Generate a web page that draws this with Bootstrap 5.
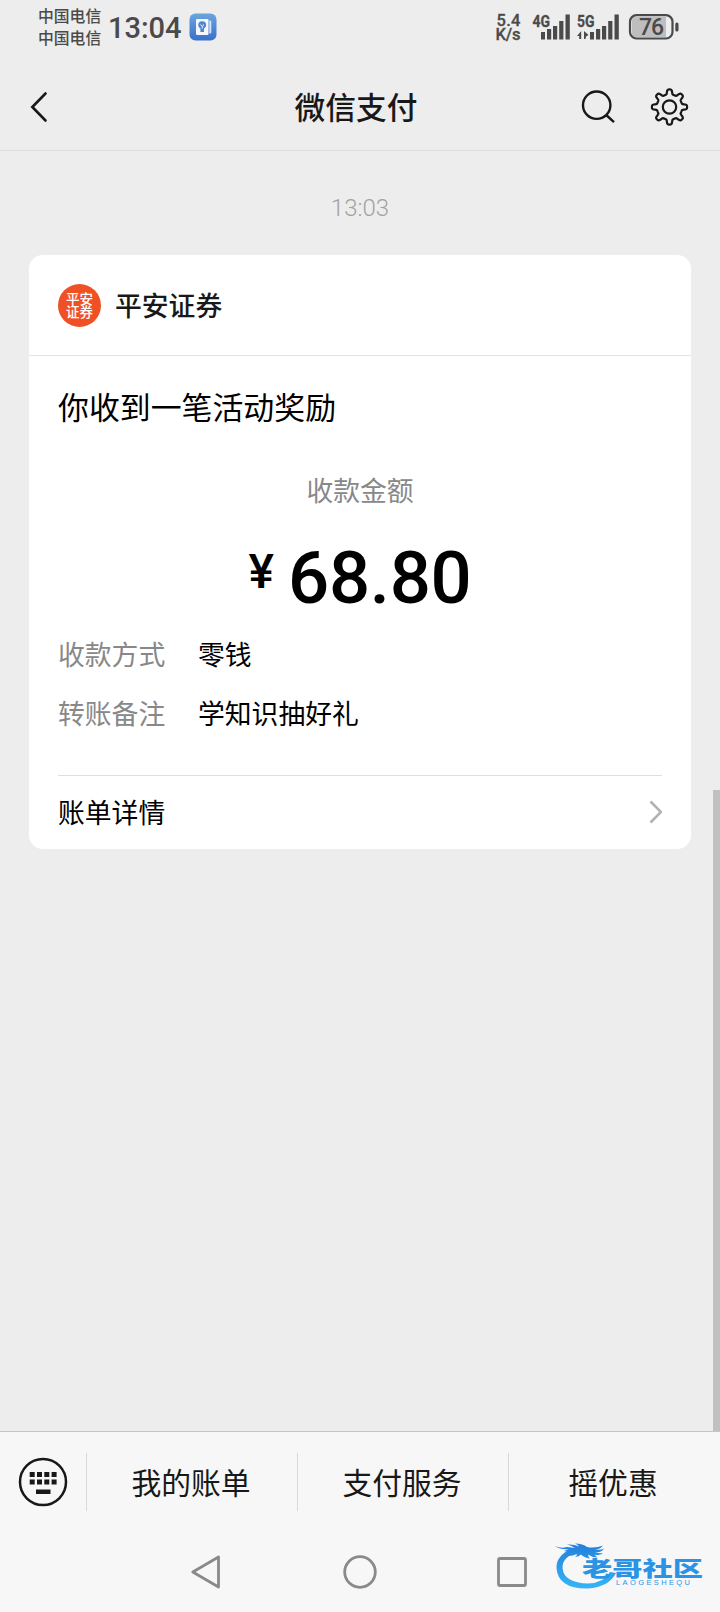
<!DOCTYPE html>
<html lang="zh-CN">
<head>
<meta charset="utf-8">
<meta name="viewport" content="width=device-width, initial-scale=1">
<title>微信支付</title>
<link href="https://cdn.jsdelivr.net/npm/bootstrap@5.3.0/dist/css/bootstrap.min.css" rel="stylesheet">
<script src="https://cdn.jsdelivr.net/npm/bootstrap@5.3.0/dist/js/bootstrap.bundle.min.js"></script>
<style>
  body { background:#ededed; color:#000; font-family:"Noto Sans CJK SC",sans-serif; line-height:1; height:1612px; overflow:hidden; }
  svg { display:block; flex:none; }
  .num { font-family:Roboto,"Noto Sans CJK SC",sans-serif; }
  .status { height:56px; color:#4a4a4a; padding:0 41px 3px 38px; }
  .carrier { font-size:15.8px; line-height:22px; width:63px; font-weight:500; white-space:nowrap; }
  .clock { font-size:29px; font-weight:500; width:81px; margin-left:7px; padding-top:3px; }
  .titlebar { height:95px; border-bottom:1px solid #dedede; padding:7px 31px 0 30px; color:#181818; }
  .titlebar h1 { font-size:30.7px; font-weight:500; margin:0; padding-right:7px; }
  .side { width:130px; }
  .stamp { font-size:24px; color:#a2a2a2; font-weight:300; height:104px; padding-top:45px; }
  .bill { border:0; border-radius:14px; margin:0 29px; height:594px; }
  .bill-head { height:101px; flex:none; border-bottom:1px solid #e3e3e3; padding:0 29px; }
  .merchant { font-size:26.8px; font-weight:500; margin-left:14px; color:#181818; }
  .logo-dot { width:43px; height:43px; background:#ef5125; color:#fff; font-size:13.5px; font-weight:500; line-height:13px; }
  .bill-body { padding:0 29px; }
  .lead-in { font-size:30.9px; height:102px; padding-bottom:2px; }
  .dim { color:#888; }
  .mid { font-size:26.8px; }
  .cap-line { height:67px; padding-bottom:2px; }
  .amount { font-weight:500; height:101px; padding-top:18px; }
  .amount .yen { font-size:48px; padding-top:5px; margin-right:14px; }
  .amount .val { font-size:72.500px; letter-spacing:-.3px; }
  .pair { height:59px; padding-bottom:2px; }
  .pair .dim { width:140px; }
  .detail { height:74px; margin-top:31px; border-top:1px solid #dedede; padding-bottom:1px; }
  .scroll-thumb { position:absolute; right:0; top:790px; width:7px; height:641px; background:#c0c0c0; }
  .menu { height:103px; background:#f7f7f7; border-top:1px solid #c6c6c6; font-size:29.8px; color:#181818; padding-bottom:2px; }
  .menu .key { width:86px; }
  .menu .item { border-left:1px solid #d9d9d9; height:58px; width:211px; padding:0 2px 1px 0; }
  .sys { height:78px; background:#f7f7f7; position:relative; }
  .stampmark { position:absolute; left:545px; top:0; }
</style>
</head>
<body class="d-flex flex-column position-relative">
<header class="status d-flex align-items-center">
  <div class="carrier"><div>中国电信</div><div>中国电信</div></div>
  <div class="clock num">13:04</div>
  <svg width="28" height="28" viewBox="0 0 28 28">
    <defs><linearGradient id="app" x1="0" y1="0" x2="0" y2="1"><stop stop-color="#6aa5df"/><stop offset="1" stop-color="#3b6fcb"/></linearGradient></defs>
    <rect x=".5" y=".5" width="27" height="27" rx="6" fill="url(#app)"/>
    <path d="M20.300 7.500h1q1 0 1 1v11q0 1-1 1h-1z" fill="#d5e4f6"/>
    <rect x="7" y="6" width="12.500" height="16" rx="1.200" fill="#f4f8fd"/>
    <path d="M9.200 12.200a4 4 0 0 1 8 0q0 2-2.200 3.200v3.600h-3.600v-3.600q-2.200-1.200-2.200-3.200z" fill="#4f86d2"/>
    <path d="M11.400 11.500l1.800 1.800 1.800-1.800M13.200 13.300v2.200" stroke="#f4f8fd" fill="none"/>
  </svg>
  <svg class="ms-auto num" width="184" height="34" viewBox="495 10 184 34" fill="#4a4a4a">
    <g font-size="16.500" font-weight="500" stroke="#4a4a4a" stroke-width=".3">
      <text x="496.500" y="25.500" textLength="24">5.4</text>
      <text x="495.500" y="39.500" textLength="25">K/s</text>
      <text x="532.500" y="27" font-weight="700" textLength="17.500" lengthAdjust="spacingAndGlyphs">4G</text>
      <text x="577" y="27" font-weight="700" textLength="17.500" lengthAdjust="spacingAndGlyphs">5G</text>
    </g>
    <path d="M541 32h4v7.500h-4zM547 29h4.200v10.500h-4.200zM553 26h4.200v13.500h-4.200zM559.200 21h4.200v18.500h-4.200zM565.500 14.500h4.300v25h-4.300z"/>
    <path d="M590 32h4v7.500h-4zM596 29h4.200v10.500h-4.200zM602 26h4.200v13.500h-4.200zM608.200 21h4.200v18.500h-4.200zM614.500 14.500h4.300v25h-4.300z"/>
    <path d="M577 36l4.200-5v8h-2v-3zM584 31l4.500 4-2.500 1.500-.5 2.500h-1.500z"/>
    <path d="M636 17h30v20h-30q-4 0-4-4v-12q0-4 4-4z" fill="#bebebe"/>
    <rect x="630" y="15.200" width="42.500" height="23.300" rx="6.500" fill="none" stroke="#4a4a4a" stroke-width="2.200"/>
    <rect x="675.300" y="22.500" width="3.200" height="9" rx="1.500"/>
    <text x="639" y="34.700" font-size="23" font-weight="500" textLength="25">76</text>
  </svg>
</header>
<nav class="titlebar d-flex align-items-center justify-content-between">
  <div class="side"><svg width="18" height="32" viewBox="0 0 18 32" fill="none" stroke="#181818" stroke-width="2.600" stroke-linecap="round"><path d="M15.500 2.500L2.300 16l13.200 13.500"/></svg></div>
  <h1>微信支付</h1>
  <div class="side d-flex justify-content-end">
    <svg width="110" height="40" viewBox="579 87 110 40" fill="none" stroke="#181818" stroke-width="2.400">
      <circle cx="596.700" cy="105.200" r="13.700"/><path d="M606.200 115l7.800 7.200"/>
      <path id="gear" stroke-width="2.200" stroke-linejoin="round"/><circle cx="669.500" cy="107" r="6.700" stroke-width="2.200"/>
    </svg>
  </div>
</nav>
<div class="stamp num text-center">13:03</div>
<main class="card bill">
  <div class="bill-head d-flex align-items-center">
    <div class="logo-dot rounded-circle d-flex align-items-center justify-content-center text-center"><span>平安<br>证券</span></div>
    <div class="merchant">平安证券</div>
  </div>
  <div class="bill-body">
    <div class="lead-in d-flex align-items-center">你收到一笔活动奖励</div>
    <div class="cap-line mid dim d-flex align-items-center justify-content-center">收款金额</div>
    <div class="amount num d-flex justify-content-center"><span class="yen">¥</span><span class="val">68.80</span></div>
    <div class="pair mid d-flex align-items-center"><span class="dim">收款方式</span><span>零钱</span></div>
    <div class="pair mid d-flex align-items-center"><span class="dim">转账备注</span><span>学知识抽好礼</span></div>
    <div class="detail mid d-flex align-items-center justify-content-between"><span>账单详情</span>
      <svg width="13" height="26" viewBox="0 0 13 26" fill="none" stroke="#b2b2b2" stroke-width="2.600"><path d="M1.500 2.500L12 13 1.500 23.500"/></svg></div>
  </div>
</main>
<div class="scroll-thumb"></div>
<footer class="mt-auto">
  <div class="menu d-flex align-items-center">
    <div class="key"><svg width="86" height="50" viewBox="0 0 86 50" fill="#181818">
      <circle cx="43" cy="25" r="23" fill="none" stroke="#181818" stroke-width="2.500"/>
      <path d="M29.700 15h5v5h-5zM37 15h5v5h-5zM44.300 15h5v5h-5zM51.600 15h5v5h-5zM29.700 22.500h5v5h-5zM37 22.500h5v5h-5zM44.300 22.500h5v5h-5zM51.600 22.500h5v5h-5zM36 32.500h14.500v4.500h-14.500z"/></svg></div>
    <div class="item d-flex align-items-center justify-content-center">我的账单</div>
    <div class="item d-flex align-items-center justify-content-center">支付服务</div>
    <div class="item d-flex align-items-center justify-content-center">摇优惠</div>
  </div>
  <div class="sys">
    <svg width="540" height="78" viewBox="0 0 540 78" fill="none" stroke="#8a8a8a" stroke-width="2.800" stroke-linejoin="round">
      <path d="M192.800 38l25.700-15v30z"/><circle cx="360" cy="38" r="15.300"/><rect x="498.500" y="24.500" width="27" height="27" rx="1.500"/>
    </svg>
    <svg class="stampmark" width="175" height="78" viewBox="545 1534 175 78">
      <defs><linearGradient id="wm" gradientUnits="userSpaceOnUse" x1="0" y1="1544" x2="0" y2="1588"><stop stop-color="#2380dc"/><stop offset="1" stop-color="#35b4f6"/></linearGradient></defs>
      <g fill="url(#wm)">
        <path d="M571 1549Q556 1556 556.500 1568Q558 1589 588 1588.500Q609 1587 616 1573L610 1572Q604 1583 588 1583.500Q564 1583 562.500 1568Q562 1557 578 1552z"/>
        <path d="M555 1546q6 3 12 1l8 1q-4-3-8-3.500q7-.5 12 2q-1-2-4-3q8 0 12 3.500q9 1.500 16-1.500q-3 4-8 4q6 1 9-1q-2 4-9 4q4 1 8 .5q-3 3-9 1.500q2 1 3 3q-5 0-9-3q0 2 2 4q-6-1-9-4q-2 2-6 2.500q2-1 2-3q-4 2-9 2q4-2 5-5q-5 1-9 0q3-1 5-2q-8 1-14-3z"/>
      </g>
      <g fill="#2b93e6">
        <text x="582" y="1575.500" font-family="Noto Sans CJK SC, sans-serif" font-weight="900" font-size="21" textLength="121" lengthAdjust="spacingAndGlyphs">老哥社区</text>
        <text x="616" y="1584.500" font-family="Liberation Sans, sans-serif" font-size="7.500" textLength="74">LAOGESHEQU</text>
      </g>
    </svg>
  </div>
</footer>
<script>
  // Eight-tooth gear outline for the settings icon
  let d = '';
  for (let i = 0; i < 240; i++) {
    const a = i / 240 * 2 * Math.PI;
    const r = 15.2 + 2.5 * Math.tanh(2.4 * (Math.cos(8 * a) - .2));
    d += (i ? 'L' : 'M') + (669.5 + r * Math.cos(a)).toFixed(2) + ' ' + (107 + r * Math.sin(a)).toFixed(2);
  }
  document.getElementById('gear').setAttribute('d', d + 'z');
</script>
</body>
</html>
